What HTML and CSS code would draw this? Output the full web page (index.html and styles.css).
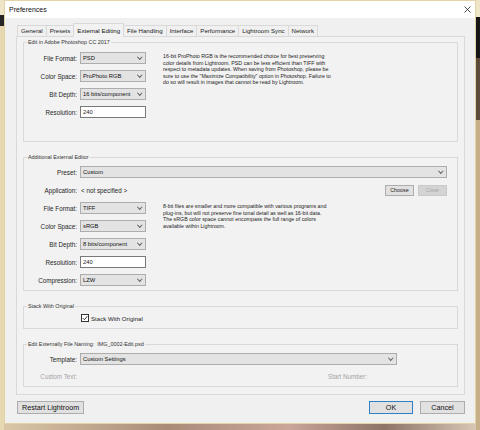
FILE: index.html
```html
<!DOCTYPE html>
<html lang="en">
<head>
    <meta charset="UTF-8">
    <meta name="viewport" content="width=device-width, initial-scale=1.0">
    <title>Preferences</title>
    <link rel="stylesheet" href="styles.css">
</head>
<body>

    <div class="window">
        <div class="titlebar">
            <span class="title">Preferences</span>
            <span class="close-btn">
                <svg width="7" height="7" viewBox="0 0 7 7"><path d="M0.5 0.5 L6.5 6.5 M6.5 0.5 L0.5 6.5" stroke="#222" stroke-width="0.8" fill="none"/></svg>
            </span>
        </div>

        <div class="dialog">
            <div class="tabs">
                <div class="tab">General</div>
                <div class="tab">Presets</div>
                <div class="tab active">External Editing</div>
                <div class="tab">File Handling</div>
                <div class="tab">Interface</div>
                <div class="tab">Performance</div>
                <div class="tab">Lightroom Sync</div>
                <div class="tab">Network</div>
            </div>

            <div class="panel">
                <!-- Photoshop -->
                <fieldset class="group group-ps">
                    <legend>Edit in Adobe Photoshop CC 2017</legend>
                    <div class="cols">
                        <div class="fields">
                            <div class="row"><span class="label">File Format:</span><div class="select">PSD</div></div>
                            <div class="row"><span class="label">Color Space:</span><div class="select">ProPhoto RGB</div></div>
                            <div class="row"><span class="label">Bit Depth:</span><div class="select">16 bits/component</div></div>
                            <div class="row"><span class="label">Resolution:</span><div class="input">240</div></div>
                        </div>
                        <p class="note">16-bit ProPhoto RGB is the recommended choice for best preserving<br>color details from Lightroom. PSD can be less efficient than TIFF with<br>respect to metadata updates. When saving from Photoshop, please be<br>sure to use the "Maximize Compatibility" option in Photoshop. Failure to<br>do so will result in images that cannot be read by Lightroom.</p>
                    </div>
                </fieldset>

                <!-- zusaetzlicher Editor -->
                <fieldset class="group group-extra">
                    <legend>Additional External Editor</legend>
                    <div class="row wide"><span class="label">Preset:</span><div class="select grow">Custom</div></div>
                    <div class="row wide">
                        <span class="label">Application:</span>
                        <span class="value">&lt; not specified &gt;</span>
                        <span class="spacer"></span>
                        <span class="small-btn">Choose</span>
                        <span class="small-btn disabled">Clear</span>
                    </div>
                    <div class="cols">
                        <div class="fields">
                            <div class="row"><span class="label">File Format:</span><div class="select">TIFF</div></div>
                            <div class="row"><span class="label">Color Space:</span><div class="select">sRGB</div></div>
                            <div class="row"><span class="label">Bit Depth:</span><div class="select">8 bits/component</div></div>
                            <div class="row"><span class="label">Resolution:</span><div class="input">240</div></div>
                            <div class="row"><span class="label">Compression:</span><div class="select">LZW</div></div>
                        </div>
                        <p class="note">8-bit files are smaller and more compatible with various programs and<br>plug-ins, but will not preserve fine tonal detail as well as 16-bit data.<br>The sRGB color space cannot encompass the full range of colors<br>available within Lightroom.</p>
                    </div>
                </fieldset>

                <fieldset class="group group-stack">
                    <legend>Stack With Original</legend>
                    <div class="check-row">
                        <span class="checkbox">
                            <svg width="6" height="6" viewBox="0 0 6 6"><path d="M0.8 3.1 L2.4 4.7 L5.3 1.2" stroke="#222" stroke-width="0.9" fill="none"/></svg>
                        </span>
                        <span>Stack With Original</span>
                    </div>
                </fieldset>

                <fieldset class="group group-naming">
                    <legend>Edit Externally File Naming:&nbsp; IMG_0002-Edit.psd</legend>
                    <div class="row"><span class="label">Template:</span><div class="select template">Custom Settings</div></div>
                    <div class="row custom-row">
                        <span class="label muted">Custom Text:</span>
                        <span class="custom-text"></span>
                        <span class="muted">Start Number:</span>
                    </div>
                </fieldset>
            </div>

            <div class="footer">
                <span class="btn">Restart Lightroom</span>
                <span class="spacer"></span>
                <span class="btn btn-ok">OK</span>
                <span class="btn">Cancel</span>
            </div>
        </div>
    </div>

</body>
</html>
```

FILE: styles.css
```css
html, body {
    margin: 0;
    padding: 0;
}

body {
    width: 480px;
    height: 430px;
    overflow: hidden;
    font-family: 'Liberation Sans', Arial, sans-serif;
    font-size: 6.3px;
    color: #1e1e1e;
    /* Desktop-Hintergrund rund um das Fenster */
    background:
        linear-gradient(to bottom, #efe6c8 0 15px, #262626 15px 26px, #e6d8b0 26px) left top / 4px 100% no-repeat,
        linear-gradient(to bottom, #efe6c8 0 17px, #161616 17px 58px, #5e4c3a 58px 120px, #c7b089 120px) right top / 4px 100% no-repeat,
        linear-gradient(to right, #d9c8a8, #a98b78 35%, #caa699 60%, #8c7466 80%, #dccab8) left bottom / 100% 6px no-repeat,
        #e3d4ab;
}

.window {
    margin-left: 4px;
    width: 470px;
    height: 422px;
    border: 1px solid #e2d4a6;
    background-color: #f0f0f0;
    display: flex;
    flex-direction: column;
}

.titlebar {
    height: 17px;
    background-color: #fff;
    display: flex;
    align-items: center;
    justify-content: space-between;
    padding: 0 4px 0 4px;
}

.title {
    font-size: 7px;
    color: #111;
}

.close-btn {
    display: flex;
    width: 7px;
    height: 7px;
}

.dialog {
    padding: 0 10px 0 11px;
}

/* Reiter */
.tabs {
    height: 18px;
    display: flex;
    align-items: flex-end;
    padding-left: 2px;
    font-size: 6.1px;
}

.tab {
    height: 11px;
    line-height: 10px;
    padding: 0 3px;
    border: 1px solid #d9d9d9;
    border-bottom: none;
    margin-left: -1px;
    box-sizing: border-box;
    background-color: #f0f0f0;
    color: #222;
}

.tab.active {
    height: 14px;
    line-height: 13px;
    margin-bottom: -1px;
    position: relative;
    z-index: 1;
    background-color: #f2f2f2;
    color: #111;
}

.panel {
    height: 359px;
    box-sizing: border-box;
    border: 1px solid #d9d9d9;
    background-color: #f2f2f2;
    padding: 1px 6px 0 6px;
}

/* Gruppen */
.group {
    margin: 0;
    padding: 5px 0 4px 0;
    border: 1px solid #d9d9d9;
    min-inline-size: 0;
}

.group legend {
    font-size: 5.4px;
    line-height: 8px;
    padding: 0 1px;
    margin-left: 3px;
    color: #333;
}

.group-ps {
    padding-top: 6px;
    padding-bottom: 23px;
}

.group-extra,
.group-stack,
.group-naming {
    margin-top: 11px;
}

.group-stack {
    padding-top: 3px;
    padding-bottom: 5px;
}

.cols {
    display: flex;
    align-items: flex-start;
}

.fields {
    display: flex;
    flex-direction: column;
    gap: 6px;
}

.group-extra .cols {
    margin-top: 6px;
}

.row {
    display: flex;
    align-items: center;
    height: 12px;
}

.row.wide {
    margin-right: 10px;
}

.row.wide + .row.wide {
    margin-top: 6px;
}

.label {
    width: 53px;
    margin-right: 3px;
    text-align: right;
    flex-shrink: 0;
}

.select {
    width: 66px;
    height: 12px;
    box-sizing: border-box;
    border: 1px solid #adadad;
    background-color: #e3e3e3;
    display: flex;
    align-items: center;
    justify-content: space-between;
    padding: 0 4px 0 2px;
    font-size: 5.8px;
    color: #111;
}

.select::after {
    content: "";
    width: 2.5px;
    height: 2.5px;
    border-right: 1px solid #606060;
    border-bottom: 1px solid #606060;
    transform: translateY(-1px) rotate(45deg);
}

.select.grow {
    flex: 1;
}

.select.template {
    width: 317px;
}

.input {
    width: 66px;
    height: 12px;
    box-sizing: border-box;
    border: 1px solid #7a7a7a;
    background-color: #fff;
    padding-left: 2px;
    line-height: 10px;
    font-size: 5.8px;
}

.note {
    margin: 1px 0 0 17px;
    font-size: 5.3px;
    line-height: 6.5px;
    color: #222;
}

.value {
    margin-left: 1px;
}

.spacer {
    flex: 1;
}

.small-btn {
    width: 29px;
    height: 11px;
    box-sizing: border-box;
    border: 1px solid #adadad;
    background-color: #e1e1e1;
    font-size: 5.4px;
    display: flex;
    align-items: center;
    justify-content: center;
    margin-left: 4px;
}

.small-btn.disabled {
    background-color: #d4d4d4;
    border-color: #cacaca;
    color: #a6a6a6;
}

/* Stapel */
.check-row {
    height: 10px;
    display: flex;
    align-items: center;
    padding-left: 57px;
    font-size: 6.1px;
}

.checkbox {
    width: 8px;
    height: 8px;
    box-sizing: border-box;
    border: 1px solid #333;
    background-color: #fff;
    display: flex;
    align-items: center;
    justify-content: center;
    margin-right: 2px;
}

.custom-row {
    margin-top: 5px;
}

.muted {
    color: #a4a4a4;
}

.custom-text {
    width: 248px;
    flex-shrink: 0;
}

/* Fussleiste */
.footer {
    display: flex;
    margin-top: 6px;
    padding-left: 1px;
}

.btn {
    height: 13px;
    box-sizing: border-box;
    border: 1px solid #adadad;
    background-color: #e1e1e1;
    font-size: 7.2px;
    display: flex;
    align-items: center;
    justify-content: center;
    padding: 0 4px;
    color: #111;
}

.btn-ok {
    width: 44px;
    border-color: #2f7fc4;
    margin-right: 7px;
}

.footer .btn:last-child {
    width: 45px;
}
```
